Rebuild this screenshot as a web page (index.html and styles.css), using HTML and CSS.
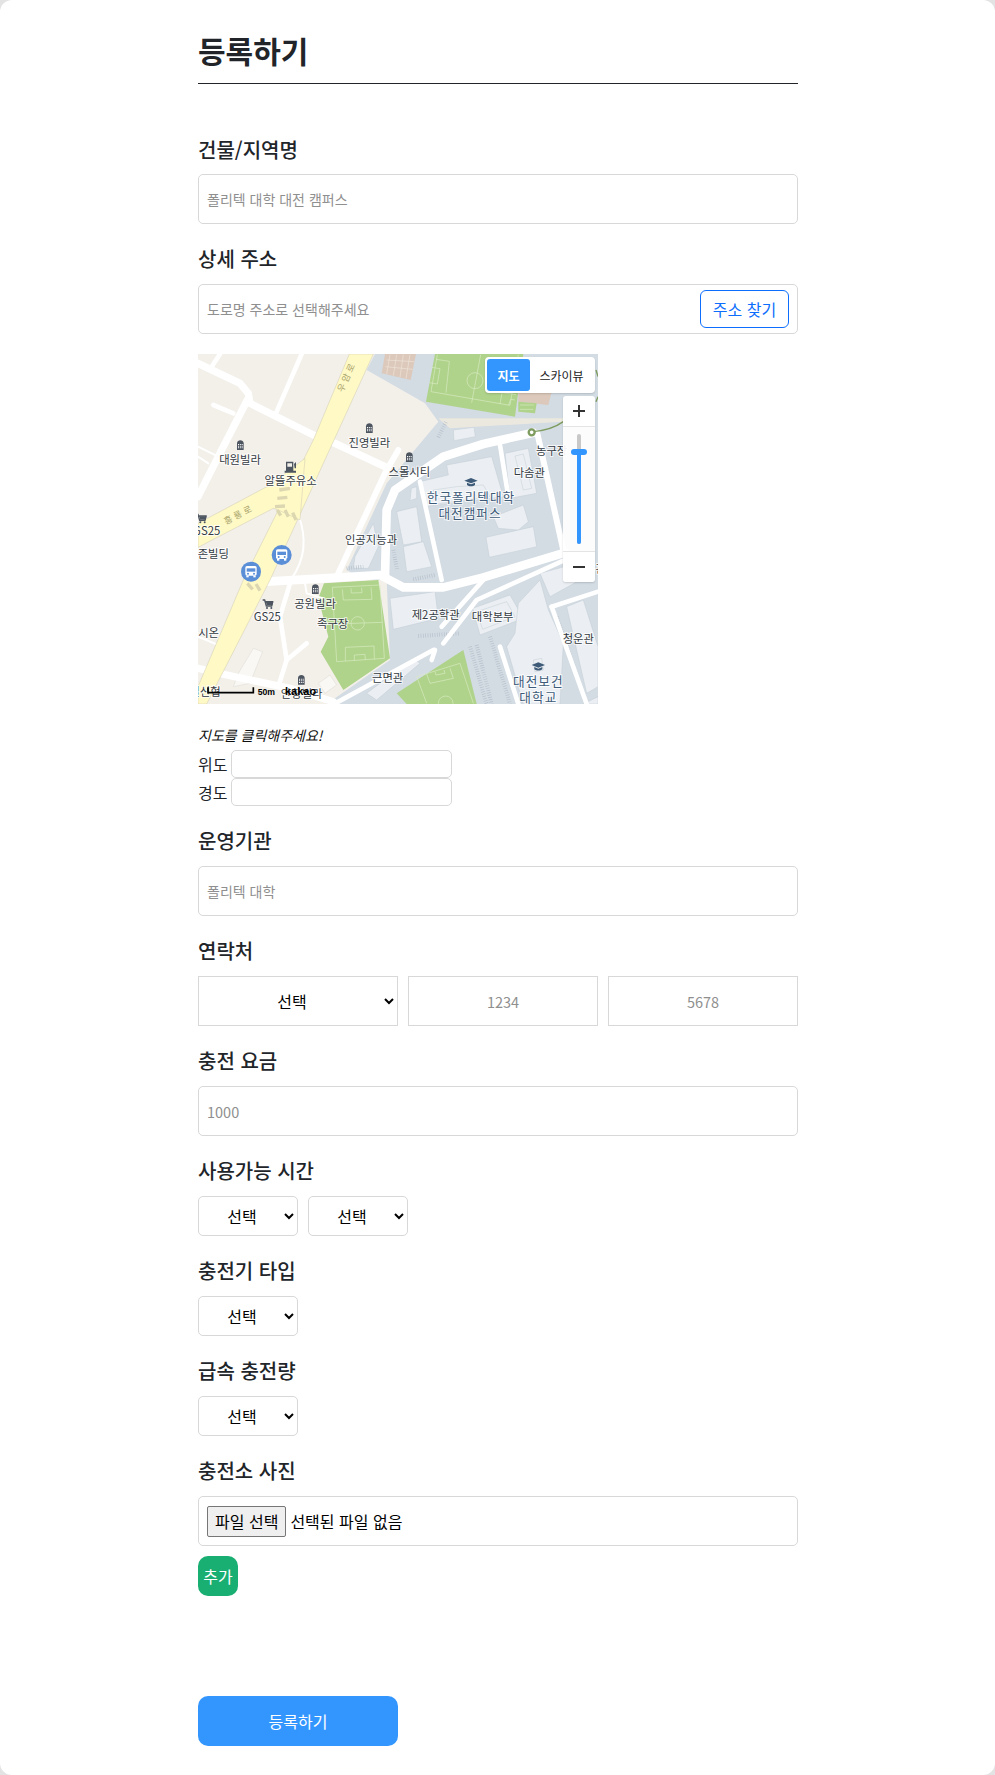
FILE: index.html
```html
<!DOCTYPE html>
<html lang="ko">
<head>
<meta charset="utf-8">
<title>등록하기</title>
<link rel="stylesheet" href="styles.css">
</head>
<body>
<main class="page">
  <h1 class="title">등록하기</h1>
  <form class="form">
    <label class="label first">건물/지역명</label>
    <input class="field" placeholder="폴리텍 대학 대전 캠퍼스">

    <label class="label">상세 주소</label>
    <div class="field address">
      <input class="bare" placeholder="도로명 주소로 선택해주세요">
      <button type="button" class="find">주소 찾기</button>
    </div>

    <div class="map">
      <svg class="map-art" viewBox="24 12 1200 1050" xmlns="http://www.w3.org/2000/svg">
        <defs>
          <g id="bld"><path d="M-10 14V-6C-10-12-5-15 0-15S10-12 10-6V14Z" fill="#4d5560"/><path d="M-7-4h3v3h-3zM-1.500-4h3v3h-3zM4-4h3v3H4zM-7 1h3v3h-3zM-1.500 1h3v3h-3zM4 1h3v3H4zM-7 6h3v3h-3zM-1.500 6h3v3h-3zM4 6h3v3H4z" fill="#fff"/></g>
          <g id="bus"><circle r="30" fill="#5a8fd8"/><rect x="-17" y="-17" width="34" height="29" rx="5" fill="#fff"/><rect x="-13" y="-10" width="26" height="10" fill="#5a8fd8"/><circle cx="-9" cy="6" r="3" fill="#5a8fd8"/><circle cx="9" cy="6" r="3" fill="#5a8fd8"/><rect x="-14" y="12" width="7" height="5" fill="#fff"/><rect x="7" y="12" width="7" height="5" fill="#fff"/></g>
          <g id="cart"><path d="M-14-12h6l5 18h16l3-13H-5" fill="none" stroke="#4d5560" stroke-width="4"/><path d="M-4-6H18L15 4H-2Z" fill="#4d5560"/><circle cx="-1" cy="12" r="3" fill="#4d5560"/><circle cx="12" cy="12" r="3" fill="#4d5560"/></g>
          <g id="cap"><path d="M-20-3 0-11 20-3 0 5Z" fill="#3d5a78"/><path d="M-12 3V10C-6 15 6 15 12 10V3L0 8Z" fill="#3d5a78"/></g>
        </defs>

        <rect class="land" x="24" y="12" width="1200" height="1050"/>
        <path class="campus" d="M530 60 555 12H1224V1062H410L600 930 590 690 520 690 470 660 590 400 745 215 705 160 600 100Z"/>
        <path class="strip" d="M745 205 1120 205 1118 215 780 235 760 218Z"/>

        <path class="brick" d="M585 12H678L662 90 575 70Z"/>
        <path class="grid" d="M590 30 672 35M586 50 668 58M600 14 590 72M620 14 610 77M640 14 630 82M660 14 648 86"/>
        <path class="brick" d="M985 125H1085L1075 165 985 155Z"/>
        <path class="grass" d="M735 12H1000L975 200 708 155Z"/>
        <path class="line" d="M742 14 723 125 960 166 985 14M872 14 845 158M738 28 778 34 768 128M725 52 750 56 742 102 718 98M930 162 936 128 978 134M956 165 962 148 975 150"/>
        <circle class="line" cx="855" cy="92" r="24"/>
        <path class="grass" d="M985 155 1040 160 1035 190 985 185Z"/>
        <path class="line" d="M990 165H1032M990 178H1030"/>

        <path class="grass" d="M402 700 565 690 600 925 460 1020 392 905 415 860 385 745Z"/>
        <path class="line" d="M427 712 570 705 583 925 440 935ZM430 822 577 817M457 718 460 750 546 748 543 712M483 715 484 729 516 728 515 713M466 933 466 892 552 888 553 928M493 932 493 915 525 913 526 930"/>
        <circle class="line" cx="503" cy="820" r="20"/>
        <path class="grass" d="M620 1030 820 900 860 1062H650Z"/>
        <path class="line" d="M680 980 810 940 850 1060M680 980 710 1060M710 972 720 1000 790 985 780 955M735 965 738 975 765 970 762 960"/>
        <circle class="line" cx="767" cy="1060" r="22"/>

        <g class="bldg">
          <path d="M770 345 905 320 940 440 905 445 700 470 690 395 775 375Z"/>
          <path d="M730 420 800 410 880 405 900 440 740 462Z"/>
          <path d="M945 310 1015 295 1040 430 960 445Z"/>
          <path d="M975 318 1000 312 1025 415 1000 420Z"/>
          <path d="M790 240 852 232 856 260 792 272Z"/>
          <path d="M620 485 680 470 695 575 640 585Z"/>
          <path d="M640 590 700 575 725 650 650 665Z"/>
          <path d="M910 500 1000 465 1015 515 985 540 925 535Z"/>
          <path d="M888 562 1030 530 1040 590 898 622Z"/>
          <path d="M600 745 735 725 745 805 610 838Z"/>
          <path d="M848 775 960 735 1000 805 870 855Z"/>
          <path d="M860 785 950 755 975 800 878 838Z"/>
          <path d="M985 760 1050 690 1075 780 1120 880 1110 1062H1000L950 890 975 850Z"/>
          <path d="M1050 670 1160 640 1170 690 1080 740Z"/>
          <path d="M1130 770 1180 750 1224 890V1010L1190 1030Z"/>
          <path d="M530 1030 670 925 690 940 560 1050Z"/>
          <path d="M495 620 550 520 565 590 535 655H490Z"/>
          <path d="M664 415 680 410 680 445 660 452Z"/>
          <path d="M1180 1062 1224 1040V1062Z"/>
          <path d="M1030 930 1055 925 1060 960 1035 965Z"/>
        </g>
        <path class="yard" d="M145 970 190 895 218 905 180 1000 130 1010Z"/>
        <path class="yard" d="M385 1000 420 975 440 1005 405 1030Z"/>

        <g class="hatch">
          <path d="M745 262 768 215"/>
          <path d="M610 600 622 662"/>
          <path d="M670 688 735 675"/>
          <path d="M470 655 520 650"/>
          <path d="M685 858 810 850"/>
          <path d="M1100 800 1190 1062"/>
          <path d="M900 860 960 1062"/>
          <path d="M840 890 890 1062"/>
          <path d="M860 885 905 1062"/>
        </g>

        <g class="road">
          <path class="w22" d="M24 40 150 100 175 130 180 160 370 255 430 278 585 350"/>
          <path class="w14" d="M90 12 65 50"/>
          <path class="w14" d="M335 12 260 185"/>
          <path class="w22" d="M172 150 100 290 24 440"/>
          <path class="w14" d="M70 165 130 190"/>
          <path class="w6" d="M24 290 85 320"/>
          <path class="w6" d="M24 320 55 340"/>
          <path class="w18" d="M625 300 585 370 445 670"/>
          <path class="w26" d="M230 695 440 683 570 675 640 712 760 712 880 682 1125 608"/>
          <path class="w26" d="M585 680 590 480 615 420 760 320 880 282 1030 248"/>
          <path class="w18" d="M1042 250 1122 610"/>
          <path class="w14" d="M930 285 955 440"/>
          <path class="w14" d="M690 395 755 690"/>
          <path class="w14" d="M760 880 860 750 1120 632"/>
          <path class="w14" d="M880 690 755 830"/>
          <path class="w14" d="M735 900 725 930"/>
          <path class="w14" d="M730 900 440 1058"/>
          <path class="w14" d="M1085 770 1224 725"/>
          <path class="w14" d="M1085 770 1190 1062"/>
          <path class="w14" d="M930 890 985 1062"/>
          <path class="w6" d="M325 495Q365 600 305 685"/>
          <path class="w14" d="M300 700 270 800 290 930 350 880"/>
          <path class="w14" d="M290 930 265 1010"/>
          <path class="w6" d="M345 700 350 730 400 745"/>
          <path class="w22" d="M24 955 110 975 300 1015 430 1055"/>
          <path class="w6" d="M24 860 85 885"/>
        </g>

        <path class="yellow" d="M478 12H550L240 690 50 1062H24V1010L160 690 370 270Z"/>
        <path class="yellow" d="M345 325 240 405 24 520V592L250 475 265 480 330 510Z"/>
        <g class="zebra">
          <path d="M268 420 300 415M262 445 292 442M255 470 285 468M262 480 272 497M285 480 295 500M308 488 318 510"/>
          <path d="M172 700 188 718M198 702 210 722"/>
        </g>

        <path class="trail" d="M1030 245Q1085 240 1120 215"/>
        <circle class="node" cx="1025" cy="247" r="9"/>
        <path class="trail" d="M1218 60 1224 80M1218 155 1224 140"/>

        <use href="#bld" x="151" y="286"/>
        <use href="#bld" x="538" y="235"/>
        <use href="#bld" x="658" y="322"/>
        <use href="#bld" x="376" y="718"/>
        <use href="#bld" x="334" y="990"/>
        <use href="#cart" x="232" y="762"/>
        <use href="#cart" x="32" y="505"/>
        <use href="#cap" x="843" y="395"/>
        <use href="#cap" x="1045" y="948"/>
        <path class="pump" d="M288 335H310V362H318V368H284V362H288ZM292 340V350H306V340ZM312 342 318 336V355H314Z"/>
        <use href="#bus" x="275" y="615"/>
        <use href="#bus" x="183" y="665"/>

        <g class="lb">
          <text x="150" y="343">대원빌라</text>
          <text x="538" y="292">진영빌라</text>
          <text x="302" y="406">알뜰주유소</text>
          <text x="658" y="379">스몰시티</text>
          <text x="1018" y="382">다솜관</text>
          <text x="1085" y="315">농구장</text>
          <text x="543" y="581">인공지능과</text>
          <text x="70" y="625">존빌딩</text>
          <text x="50" y="556">GS25</text>
          <text x="375" y="775">공원빌라</text>
          <text x="232" y="814">GS25</text>
          <text x="428" y="835">족구장</text>
          <text x="737" y="806">제2공학관</text>
          <text x="908" y="813">대학본부</text>
          <text x="1165" y="880">청운관</text>
          <text x="40" y="862">가시온</text>
          <text x="593" y="997">근면관</text>
          <text x="45" y="1039">일신협</text>
          <text x="335" y="1045">안창빌라</text>
          <text x="1232" y="670">관</text>
        </g>
        <g class="lb big">
          <text x="843" y="456">한국폴리텍대학</text>
          <text x="840" y="504">대전캠퍼스</text>
          <text x="1045" y="1008">대전보건</text>
          <text x="1045" y="1056">대학교</text>
        </g>
        <g class="road-name">
          <text transform="translate(108 524) rotate(-27)">흥 룡 로</text>
          <text transform="translate(458 128) rotate(-65)">우 암 로</text>
        </g>
        <path class="scale" d="M54 1012V1028H190V1012" />
        <text class="scale-text" x="203" y="1036">50m</text>
        <text class="kakao" x="285" y="1034">kakao</text>
      </svg>

      <div class="type-ctl">
        <span class="type-on">지도</span>
        <span class="type-off">스카이뷰</span>
      </div>
      <div class="zoom-ctl">
        <div class="zoom-btn">
          <svg width="14" height="14" viewBox="0 0 14 14"><path d="M7 1V13M1 7H13" stroke="#333" stroke-width="2"/></svg>
        </div>
        <div class="slider"><span class="track"></span><span class="fill"></span><span class="handle"></span></div>
        <div class="zoom-btn minus">
          <svg width="14" height="14" viewBox="0 0 14 14"><path d="M1 7H13" stroke="#333" stroke-width="2"/></svg>
        </div>
      </div>
    </div>

    <p class="hint">지도를 클릭해주세요!</p>
    <div class="coord"><span>위도</span><input class="coord-input"></div>
    <div class="coord"><span>경도</span><input class="coord-input"></div>

    <label class="label">운영기관</label>
    <input class="field" placeholder="폴리텍 대학">

    <label class="label">연락처</label>
    <div class="phone">
      <select class="sel square"><option>선택</option></select>
      <input class="square num" placeholder="1234">
      <input class="square num" placeholder="5678">
    </div>

    <label class="label">충전 요금</label>
    <input class="field fee" placeholder="1000">

    <label class="label">사용가능 시간</label>
    <div class="sel-row">
      <select class="sel small"><option>선택</option></select>
      <select class="sel small"><option>선택</option></select>
    </div>

    <label class="label">충전기 타입</label>
    <div class="sel-row"><select class="sel small"><option>선택</option></select></div>

    <label class="label">급속 충전량</label>
    <div class="sel-row"><select class="sel small"><option>선택</option></select></div>

    <label class="label">충전소 사진</label>
    <div class="field file">
      <button type="button" class="file-btn">파일 선택</button>
      <span>선택된 파일 없음</span>
    </div>
    <button type="button" class="add">추가</button>

    <button type="button" class="submit">등록하기</button>
  </form>
</main>
</body>
</html>
```
FILE: styles.css
```css
* { box-sizing: border-box; }
html { background: #e3e3e3; }
body {
  margin: 0;
  height: 1775px;
  background: #fff;
  border-radius: 12px;
  overflow: hidden;
  font-family: "Noto Sans CJK KR", "Noto Sans", sans-serif;
  color: #212529;
}
.page { width: 600px; margin-left: 198px; }
.title {
  margin: 0;
  height: 84px;
  padding-top: 28px;
  font-size: 30px;
  line-height: 44px;
  font-weight: 700;
  border-bottom: 1px solid #212529;
}
.form { display: flex; flex-direction: column; align-items: flex-start; }
.label {
  display: block;
  height: 30px;
  margin: 20px 0 10px;
  font-size: 20px;
  line-height: 30px;
  font-weight: 500;
}
.label.first { margin: 51px 0 9px; }
.field {
  display: block;
  width: 600px;
  height: 50px;
  padding: 0 8px;
  background: #fff;
  border: 1px solid #d8d8d8;
  border-radius: 5px;
  font: inherit;
  font-size: 14px;
  outline: none;
}
.field::placeholder, .bare::placeholder { color: #8f8f8f; }
.bare {
  flex: 1;
  border: 0;
  padding: 0;
  font: inherit;
  font-size: 14px;
  outline: none;
}
.address { display: flex; align-items: center; justify-content: space-between; }
.find {
  width: 89px;
  height: 38px;
  padding: 0;
  background: #fff;
  color: #0d6efd;
  border: 1px solid #0d6efd;
  border-radius: 6px;
  font: inherit;
  font-size: 16px;
}

.map {
  position: relative;
  width: 400px;
  height: 350px;
  margin-top: 20px;
  overflow: hidden;
}
.map-art { display: block; width: 400px; height: 350px; }
.land { fill: #f3f0ea; }
.campus { fill: #d3dbe3; }
.strip { fill: #ebe8df; }
.brick { fill: #dcc9bb; }
.grid { fill: none; stroke: #efe4da; stroke-width: 2; }
.grass { fill: #afd38a; }
.line { fill: none; stroke: #d9ecc4; stroke-width: 2; }
.yard { fill: #f9f8f5; stroke: #e2dfd8; stroke-width: 2; }
.bldg path { fill: #ebeff3; stroke: #c3ccd5; stroke-width: 1.500; }
.hatch path { fill: none; stroke: #b6c0ca; stroke-width: 12; stroke-dasharray: 2 5; }
.road path { fill: none; stroke: #fff; stroke-linejoin: round; stroke-linecap: round; }
.w6 { stroke-width: 6; }
.w14 { stroke-width: 14; }
.w18 { stroke-width: 18; }
.w22 { stroke-width: 22; }
.w26 { stroke-width: 26; }
.yellow { fill: #fff9c6; stroke: #cfcbb0; stroke-width: 1.500; }
.zebra path { fill: none; stroke: #dcd7b0; stroke-width: 10; }
.trail { fill: none; stroke: #7d9c5e; stroke-width: 4; }
.node { fill: #fff; stroke: #7d9c5e; stroke-width: 7; }
.pump { fill: #4d5560; }
.lb text {
  font-size: 34px;
  fill: #333a42;
  text-anchor: middle;
  stroke: #fff;
  stroke-width: 6px;
  stroke-opacity: .75;
  paint-order: stroke;
}
.lb.big text { font-size: 38px; letter-spacing: 3px; fill: #3d5a78; }
.road-name text { font-size: 27px; fill: #a8a36b; }
.scale { fill: none; stroke: #000; stroke-width: 5; }
.scale-text { font-family: "Liberation Sans", sans-serif; font-size: 26px; font-weight: 700; fill: #000; }
.kakao { font-family: "Liberation Sans", sans-serif; font-size: 33px; font-weight: 700; fill: #000; }

.type-ctl {
  position: absolute;
  top: 3px;
  left: 287px;
  display: flex;
  width: 110px;
  height: 36px;
  padding: 2px;
  background: #fff;
  border-radius: 4px;
  box-shadow: 0 1px 2px rgba(0,0,0,.15);
  font-size: 12px;
}
.type-on, .type-off { display: flex; align-items: center; justify-content: center; }
.type-on { width: 43px; background: #3396ff; color: #fff; font-weight: 700; border-radius: 3px; }
.type-off { flex: 1; color: #222; }
.zoom-ctl {
  position: absolute;
  top: 42px;
  left: 365px;
  display: flex;
  flex-direction: column;
  width: 32px;
  height: 186px;
  border-radius: 3px;
  box-shadow: 0 1px 2px rgba(0,0,0,.15);
  overflow: hidden;
}
.zoom-btn {
  display: flex;
  align-items: center;
  justify-content: center;
  height: 31px;
  background: #fff;
  border-bottom: 1px solid #e4e4e4;
}
.zoom-btn.minus { border-bottom: 0; border-top: 1px solid #e4e4e4; }
.slider { position: relative; flex: 1; background: rgba(255,255,255,.92); }
.track { position: absolute; top: 7px; bottom: 7px; left: 14px; width: 4px; background: #c8c8c8; border-radius: 2px; }
.fill { position: absolute; top: 25px; bottom: 7px; left: 14px; width: 4px; background: #3396ff; border-radius: 2px; }
.handle { position: absolute; top: 22px; left: 8px; width: 16px; height: 6px; background: #3396ff; border-radius: 3px; }

.hint { margin: 23px 0 7px; height: 16px; font-size: 14px; line-height: 16px; font-style: italic; font-weight: 400; color: #111; }
.coord { display: flex; align-items: center; gap: 4px; height: 28px; font-size: 16px; color: #212529; }
.coord-input {
  width: 221px;
  height: 28px;
  background: #fff;
  border: 1px solid #d8d8d8;
  border-radius: 5px;
  outline: none;
}
.coord + .label { margin-top: 20px; }
.phone { display: flex; gap: 10px; width: 600px; }
.square {
  height: 50px;
  background: #fff;
  border: 1px solid #d8d8d8;
  border-radius: 0;
  font: inherit;
  font-size: 16px;
  text-align: center;
  outline: none;
}
.sel.square { width: 200px; color: #000; }
.num { flex: 1; min-width: 0; font-size: 14.500px; }
.num::placeholder { color: #8f8f8f; }
.fee { font-size: 14.500px; }
.sel-row { display: flex; gap: 10px; }
.sel { font: inherit; font-size: 16px; color: #000; text-align: center; }
.small {
  width: 100px;
  height: 40px;
  background: #fff;
  border: 1px solid #d8d8d8;
  border-radius: 5px;
  outline: none;
}
.file { display: flex; align-items: center; gap: 4px; font-size: 16px; color: #000; }
.file-btn {
  height: 31px;
  padding: 0 7px;
  background: #efefef;
  border: 1px solid #767676;
  border-radius: 2px;
  font: inherit;
  font-size: 16px;
  color: #000;
}
.add {
  width: 40px;
  height: 40px;
  margin-top: 10px;
  padding: 0;
  background: #19ae72;
  color: #fff;
  border: 0;
  border-radius: 10px;
  font: inherit;
  font-size: 16px;
}
.submit {
  width: 200px;
  height: 50px;
  margin-top: 100px;
  padding: 0;
  background: #3396ff;
  color: #fff;
  border: 0;
  border-radius: 10px;
  font: inherit;
  font-size: 16px;
}
```
